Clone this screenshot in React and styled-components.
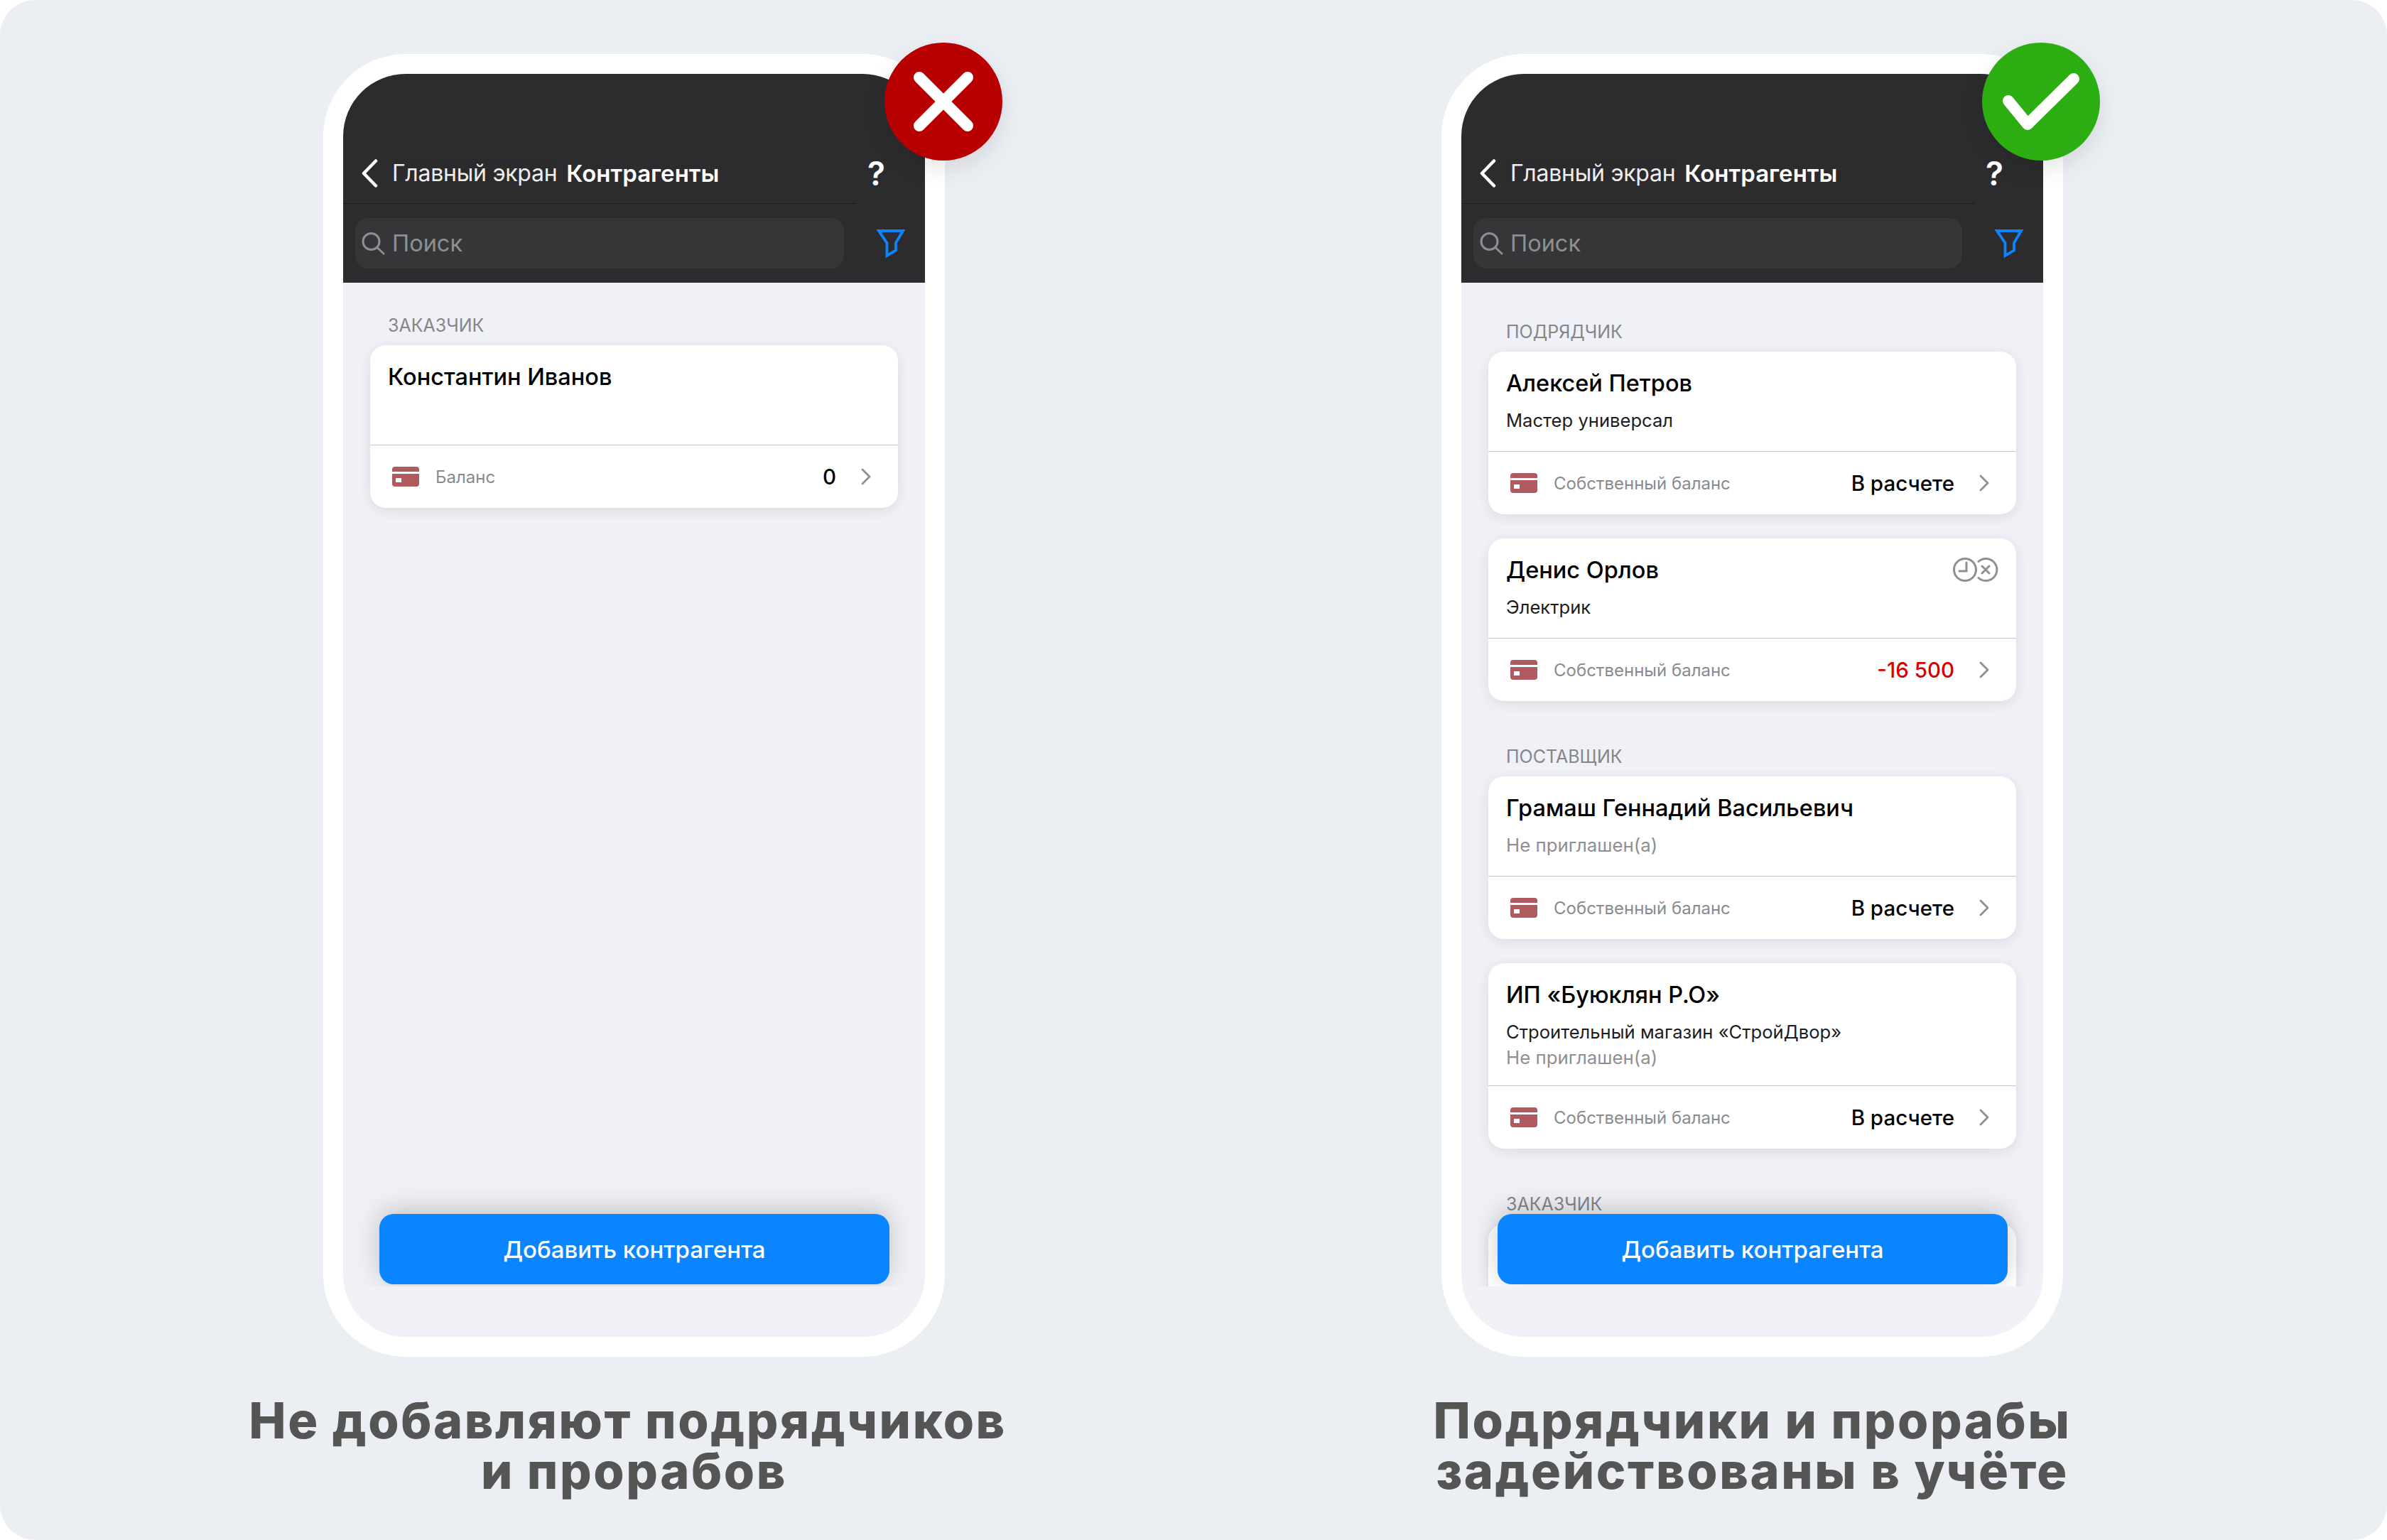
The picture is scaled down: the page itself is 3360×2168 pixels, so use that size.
import React from 'react'
import styled, { createGlobalStyle } from 'styled-components'

const GlobalStyle = createGlobalStyle`
  html, body {
    margin: 0;
    padding: 0;
    background: #ffffff;
  }
  body {
    font-family: Inter, 'Noto Sans', sans-serif;
  }
`

const Page = styled.div`
  display: flex;
  gap: 699px;
  width: 3360px;
  height: 2168px;
  box-sizing: border-box;
  padding: 76px 0 0 455px;
  background: #ebeef3;
  border-radius: 50px;
  overflow: hidden;
`

const Column = styled.section`
  display: flex;
  flex-direction: column;
  align-items: center;
  width: 875px;
`

const Phone = styled.div`
  position: relative;
  width: 875px;
  height: 1834px;
  box-sizing: border-box;
  padding: 28px;
  background: #ffffff;
  border-radius: 116px;
`

const Screen = styled.div`
  position: relative;
  display: flex;
  flex-direction: column;
  height: 100%;
  background: #f0f1f6;
  border-radius: 88px;
  overflow: hidden;
`

const Header = styled.header`
  flex: none;
  height: 294px;
  background: #2c2c2e;
`

const NavRow = styled.div`
  display: flex;
  align-items: center;
  height: 183px;
  box-sizing: border-box;
  padding: 96px 0 0 26px;
  position: relative;
  color: #ffffff;

  &::after {
    content: '';
    position: absolute;
    left: 0;
    bottom: 0;
    width: 722px;
    height: 1px;
    background: #1c1c1e;
  }
`

const BackIcon = styled.svg`
  flex: none;
  width: 24px;
  height: 40px;
  margin-right: 19px;
`

const Crumb = styled.span`
  font-size: 32px;
  font-weight: 400;
  letter-spacing: -0.25px;
  margin-right: 13px;
  opacity: 0.92;
`

const Title = styled.span`
  font-size: 33px;
  font-weight: 600;
`

const Help = styled.span`
  margin-left: auto;
  margin-right: 56px;
  font-size: 46px;
  font-weight: 600;
  line-height: 1;
`

const SearchRow = styled.div`
  display: flex;
  align-items: center;
  height: 111px;
  padding: 0 28px 0 17px;
  box-sizing: border-box;
`

const SearchBox = styled.div`
  display: flex;
  align-items: center;
  gap: 10px;
  width: 688px;
  height: 71px;
  box-sizing: border-box;
  padding: 0 9px;
  background: #363639;
  border-radius: 18px;
  color: #8e8e93;
  font-size: 32.5px;
`

const FilterIcon = styled.svg`
  width: 40px;
  height: 40px;
  margin-left: auto;
`

const Body = styled.div`
  flex: 1;
  min-height: 0;
  padding: ${(p) => p.$top}px 38px 0;
  overflow: hidden;
`

const Section = styled.div`
  margin-bottom: 61px;
`

const SectionLabel = styled.div`
  padding-left: 25px;
  margin-bottom: 11px;
  height: 34px;
  line-height: 34px;
  font-size: 25px;
  color: #86868a;
`

const CardList = styled.div`
  display: flex;
  flex-direction: column;
  gap: 34px;
`

const Card = styled.article`
  background: #ffffff;
  border-radius: 22px;
  box-shadow: 0 4px 18px rgba(0, 0, 0, 0.09);
  min-height: 229px;
`

const CardHead = styled.div`
  min-height: 141px;
  box-sizing: border-box;
  padding: 22px 25px 21px 25px;
  border-bottom: 1px solid #c6c6c8;
`

const NameRow = styled.div`
  display: flex;
  justify-content: space-between;
  align-items: center;
  height: 44px;
  margin-bottom: 13px;
`

const Name = styled.div`
  font-size: 32.5px;
  font-weight: 500;
  color: #000000;
`

const Role = styled.div`
  font-size: 25.6px;
  line-height: 36px;
  color: #1c1c1e;
`

const Invite = styled.div`
  font-size: 25.8px;
  line-height: 36px;
  color: #8e8e93;

  &:nth-child(2) {
    margin-top: 7px;
  }
`

const CardFoot = styled.div`
  display: flex;
  align-items: center;
  height: 88px;
  box-sizing: border-box;
  padding: 0 38px 0 31px;
`

const CardIcon = styled.svg`
  flex: none;
  width: 38px;
  height: 28px;
  margin-right: 23px;
`

const FootLabel = styled.span`
  font-size: 24px;
  color: #8a8a8e;
`

const FootValue = styled.span`
  margin-left: auto;
  font-size: 29.5px;
  font-weight: 500;
  color: ${(p) => (p.$negative ? '#d70000' : '#000000')};
`

const Chevron = styled.svg`
  flex: none;
  width: 15px;
  height: 24px;
  margin-left: 34px;
`

const AddButton = styled.button`
  position: absolute;
  z-index: 1;
  left: 51px;
  right: 50px;
  bottom: 74px;
  height: 99px;
  border: 0;
  border-radius: 20px;
  background: #0a84ff;
  box-shadow: 0 -6px 34px rgba(0, 0, 0, 0.2);
  color: #ffffff;
  font-family: inherit;
  font-size: 33px;
  font-weight: 500;
`

const BottomCover = styled.div`
  position: absolute;
  z-index: 2;
  left: 0;
  right: 0;
  bottom: 0;
  height: 71px;
  background: #f0f1f6;
`

const Badge = styled.div`
  position: absolute;
  z-index: 3;
  top: -16px;
  left: ${(p) => p.$left}px;
  display: flex;
  align-items: center;
  justify-content: center;
  width: 166px;
  height: 166px;
  border-radius: 50%;
  background: ${(p) => p.$color};
  box-shadow: 0 12px 32px rgba(0, 0, 0, 0.1);
`

const Caption = styled.h2`
  margin: 54px 0 0;
  text-align: center;
  font-size: 70px;
  line-height: 71px;
  font-weight: 800;
  letter-spacing: 2.6px;
  color: #555555;
  white-space: nowrap;
`

const CARD_PATH = 'M4 0H34a4 4 0 0 1 4 4V7H0V4a4 4 0 0 1 4-4ZM0 10H38V24a4 4 0 0 1-4 4H4a4 4 0 0 1-4-4Z'

function BalanceFoot({ label, value, negative }) {
  return (
    <CardFoot>
      <CardIcon viewBox="0 0 38 28">
        <path d={CARD_PATH} fill="#ae5a5e" />
        <rect x="5" y="16" width="8" height="6" fill="#ffffff" />
      </CardIcon>
      <FootLabel>{label}</FootLabel>
      <FootValue $negative={negative}>{value}</FootValue>
      <Chevron viewBox="0 0 15 24" fill="none" stroke="#8e8e93" strokeWidth="2.8" strokeLinecap="round" strokeLinejoin="round">
        <path d="M3 2l10 10L3 22" />
      </Chevron>
    </CardFoot>
  )
}

function StatusIcons() {
  return (
    <svg width="64" height="34" viewBox="0 0 64 34" fill="none" stroke="#8e8e93" strokeWidth="3" strokeLinecap="round">
      <path d="M36 5.5a15.5 15.5 0 1 1 0 23" />
      <path d="M41 12l10 10M51 12L41 22" />
      <circle cx="17" cy="17" r="15.5" />
      <path d="M19 7V19H9" />
    </svg>
  )
}

function Contact({ name, role, invite, status, label, value, negative }) {
  return (
    <Card>
      <CardHead>
        <NameRow>
          <Name>{name}</Name>
          {status && <StatusIcons />}
        </NameRow>
        {role && <Role>{role}</Role>}
        {invite && <Invite>Не приглашен(а)</Invite>}
      </CardHead>
      <BalanceFoot label={label} value={value} negative={negative} />
    </Card>
  )
}

function AppBar() {
  return (
    <Header>
      <NavRow>
        <BackIcon viewBox="0 0 24 40" fill="none" stroke="#ffffff" strokeWidth="4.5" strokeLinecap="round" strokeLinejoin="round">
          <path d="M20 2.5L3 20l17 17.5" />
        </BackIcon>
        <Crumb>Главный экран</Crumb>
        <Title>Контрагенты</Title>
        <Help>?</Help>
      </NavRow>
      <SearchRow>
        <SearchBox>
          <svg width="33" height="32" viewBox="0 0 33 32" fill="none" stroke="#8e8e93" strokeWidth="3" strokeLinecap="round">
            <circle cx="13.5" cy="13" r="11.5" />
            <path d="M22 21.5L31 30" />
          </svg>
          Поиск
        </SearchBox>
        <FilterIcon viewBox="0 0 40 40" fill="none" stroke="#0a84ff" strokeWidth="3.8" strokeLinejoin="miter">
          <path d="M3 2H37L27 19V29.5L14.5 37V19Z" />
        </FilterIcon>
      </SearchRow>
    </Header>
  )
}

function AddBar() {
  return (
    <>
      <AddButton>Добавить контрагента</AddButton>
      <BottomCover />
    </>
  )
}

export default function App() {
  return (
    <>
      <GlobalStyle />
      <Page>
        <Column>
          <Phone>
            <Screen>
              <AppBar />
              <Body $top={43}>
                <Section>
                  <SectionLabel>ЗАКАЗЧИК</SectionLabel>
                  <CardList>
                    <Contact name="Константин Иванов" label="Баланс" value="0" />
                  </CardList>
                </Section>
              </Body>
              <AddBar />
            </Screen>
            <Badge $left={790} $color="#b80000">
              <svg width="110" height="110" viewBox="0 0 110 110" fill="none" stroke="#ffffff" strokeWidth="16" strokeLinecap="round">
                <path d="M21 21L89 89M89 21L21 89" />
              </svg>
            </Badge>
          </Phone>
          <Caption>
            Не добавляют подрядчиков&nbsp;
            <br />и прорабов
          </Caption>
        </Column>
        <Column>
          <Phone>
            <Screen>
              <AppBar />
              <Body $top={52}>
                <Section>
                  <SectionLabel>ПОДРЯДЧИК</SectionLabel>
                  <CardList>
                    <Contact name="Алексей Петров" role="Мастер универсал" label="Собственный баланс" value="В расчете" />
                    <Contact name="Денис Орлов" role="Электрик" status label="Собственный баланс" value="-16 500" negative />
                  </CardList>
                </Section>
                <Section>
                  <SectionLabel>ПОСТАВЩИК</SectionLabel>
                  <CardList>
                    <Contact name="Грамаш Геннадий Васильевич" invite label="Собственный баланс" value="В расчете" />
                    <Contact name="ИП «Буюклян Р.О»" role="Строительный магазин «СтройДвор»" invite label="Собственный баланс" value="В расчете" />
                  </CardList>
                </Section>
                <Section>
                  <SectionLabel>ЗАКАЗЧИК</SectionLabel>
                  <Card />
                </Section>
              </Body>
              <AddBar />
            </Screen>
            <Badge $left={761} $color="#2cae12">
              <svg width="166" height="166" viewBox="0 0 166 166" fill="none" stroke="#ffffff" strokeWidth="16" strokeLinecap="round" strokeLinejoin="round">
                <path d="M37 82L64 115L129 51" />
              </svg>
            </Badge>
          </Phone>
          <Caption>
            Подрядчики и прорабы
            <br />
            задействованы в учёте
          </Caption>
        </Column>
      </Page>
    </>
  )
}
